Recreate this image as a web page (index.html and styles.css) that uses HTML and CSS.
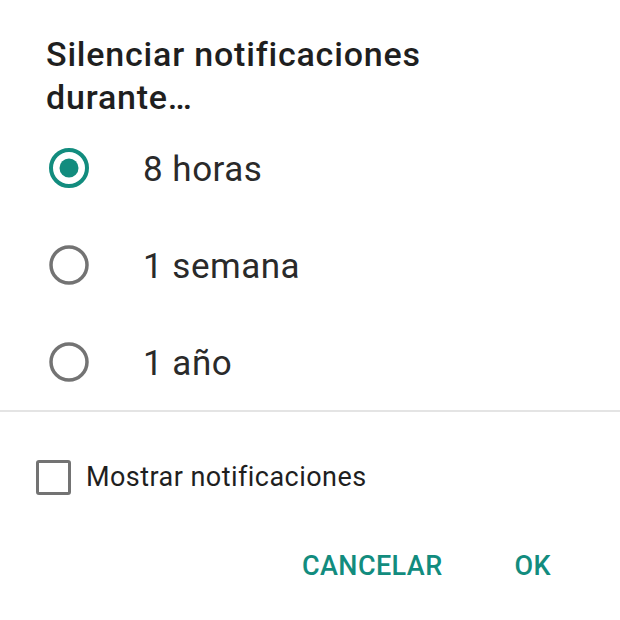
FILE: index.html
```html
<!DOCTYPE html>
<html lang="es">
  <head>
    <meta charset="UTF-8" />
    <meta name="viewport" content="width=device-width, initial-scale=1" />
    <title>Silenciar notificaciones</title>
    <link rel="stylesheet" href="styles.css">
  </head>
  <body>
    <div class="dialog">
      <h1 class="title">Silenciar notificaciones durante…</h1>

      <ul class="options">
        <li class="option checked">
          <svg class="radio" viewBox="0 0 40 40" width="40" height="40">
            <circle cx="20" cy="20" r="18" />
            <circle class="dot" cx="20" cy="20" r="9.5" />
          </svg>
          <span>8 horas</span>
        </li>
        <li class="option">
          <svg class="radio" viewBox="0 0 40 40" width="40" height="40">
            <circle cx="20" cy="20" r="18" />
          </svg>
          <span>1 semana</span>
        </li>
        <li class="option">
          <svg class="radio" viewBox="0 0 40 40" width="40" height="40">
            <circle cx="20" cy="20" r="18" />
          </svg>
          <span>1 año</span>
        </li>
      </ul>

      <hr class="divider" />

      <label class="check">
        <span class="box"></span>
        <span>Mostrar notificaciones</span>
      </label>

      <div class="actions">
        <button>CANCELAR</button>
        <button>OK</button>
      </div>
    </div>
  </body>
</html>
```

FILE: styles.css
```css
html,
body {
  margin: 0;
  padding: 0;
  background: #fff;
  font-family: Roboto, "Noto Sans", sans-serif;
  color: #212121;
}

.dialog {
  width: 620px;
  height: 620px;
  overflow: hidden;
}

.title {
  margin: 0;
  padding: 33px 150px 0 46px;
  font-size: 34px;
  font-weight: 500;
  letter-spacing: 0.8px;
  line-height: 43px;
  color: #1f1f1f;
}

.options {
  list-style: none;
  margin: 0;
  padding: 0;
}
.option {
  display: flex;
  align-items: center;
  gap: 54px;
  height: 97px;
  padding-left: 49px;
  font-size: 35px;
  letter-spacing: 0.5px;
  color: #2a2a2a;
}
.option span {
  padding-top: 3px;
}
.radio circle {
  fill: none;
  stroke: #737373;
  stroke-width: 3.5;
}
.option.checked .radio circle {
  stroke: #128c7e;
  stroke-width: 4;
}
.option.checked .radio .dot {
  fill: #128c7e;
  stroke: none;
}

.divider {
  margin: 0;
  border: 0;
  height: 2px;
  background: #e4e4e4;
}

.check {
  display: flex;
  align-items: center;
  gap: 15px;
  height: 70px;
  margin-top: 30px;
  padding-left: 36px;
  font-size: 27px;
  letter-spacing: 0.45px;
  color: #1f1f1f;
}
.box {
  box-sizing: border-box;
  width: 35px;
  height: 35px;
  border: 3.5px solid #737373;
  border-radius: 3px;
}

.actions {
  display: flex;
  justify-content: flex-end;
  align-items: center;
  gap: 72px;
  height: 50px;
  margin-top: 29px;
  padding-right: 69px;
}
.actions button {
  margin: 0;
  padding: 0;
  border: 0;
  background: none;
  font: inherit;
  font-size: 27px;
  font-weight: 500;
  letter-spacing: 0.4px;
  color: #128c7e;
  cursor: pointer;
}
```
